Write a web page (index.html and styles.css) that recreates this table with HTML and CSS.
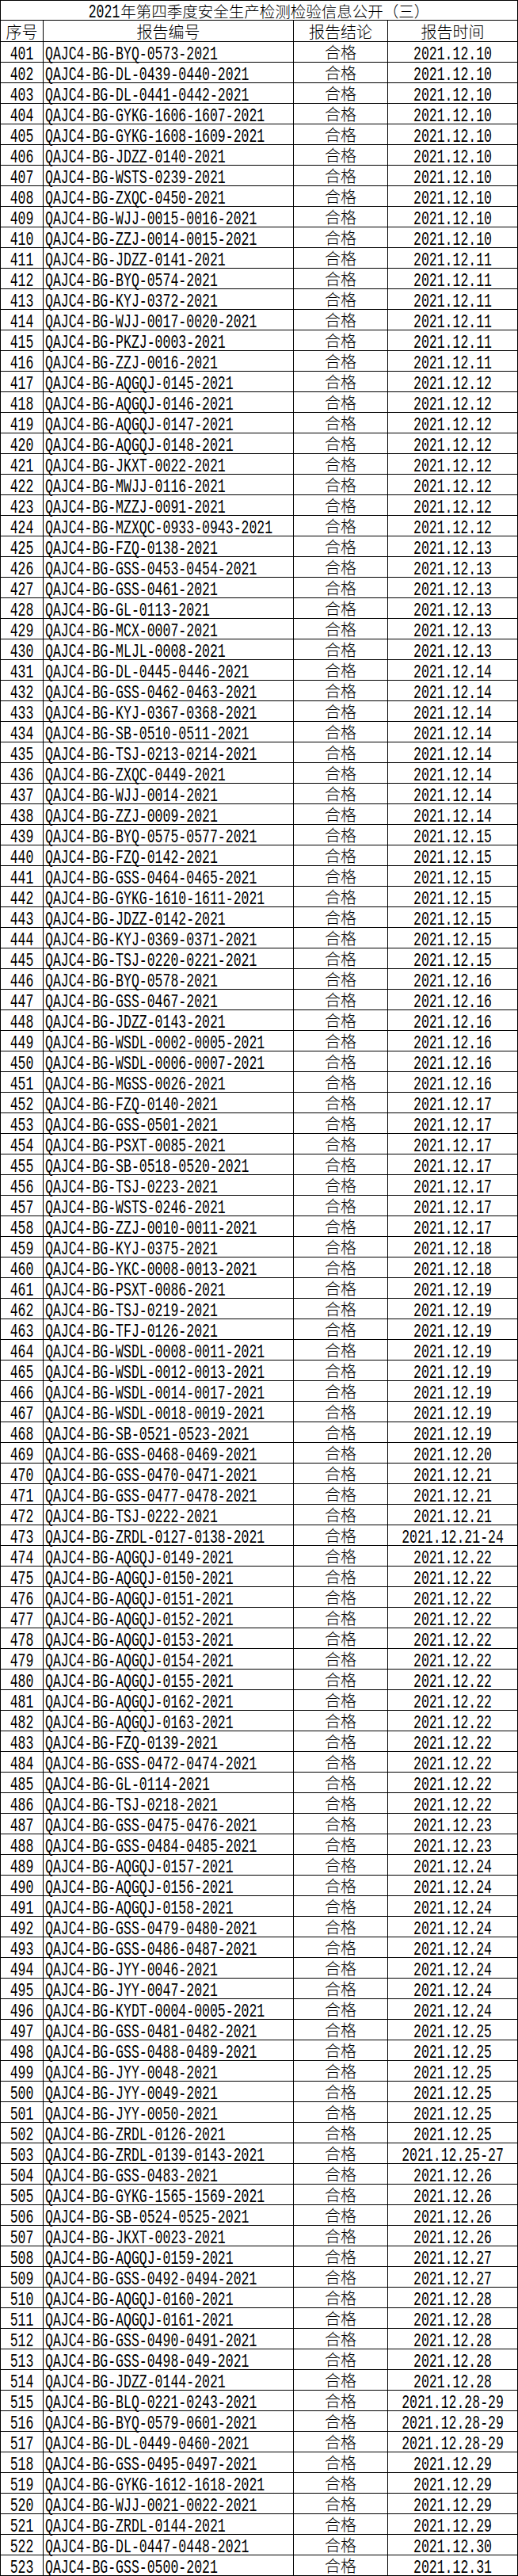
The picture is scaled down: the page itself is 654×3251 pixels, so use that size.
FILE: index.html
```html
<!DOCTYPE html>
<html lang="zh-CN">
<head>
<meta charset="utf-8">
<title>2021年第四季度安全生产检测检验信息公开（三）</title>
<link rel="stylesheet" href="styles.css">
</head>
<body>
<div class="sheet">
<div class="title"><span class="lt">2021</span>年第四季度安全生产检测检验信息公开（三）</div>
<div class="h">序号</div><div class="h">报告编号</div><div class="h">报告结论</div><div class="h">报告时间</div>
<div class="n"><span>401</span></div><div class="k"><span>QAJC4-BG-BYQ-0573-2021</span></div><div class="r">合格</div><div class="d"><span>2021.12.10</span></div>
<div class="n"><span>402</span></div><div class="k"><span>QAJC4-BG-DL-0439-0440-2021</span></div><div class="r">合格</div><div class="d"><span>2021.12.10</span></div>
<div class="n"><span>403</span></div><div class="k"><span>QAJC4-BG-DL-0441-0442-2021</span></div><div class="r">合格</div><div class="d"><span>2021.12.10</span></div>
<div class="n"><span>404</span></div><div class="k"><span>QAJC4-BG-GYKG-1606-1607-2021</span></div><div class="r">合格</div><div class="d"><span>2021.12.10</span></div>
<div class="n"><span>405</span></div><div class="k"><span>QAJC4-BG-GYKG-1608-1609-2021</span></div><div class="r">合格</div><div class="d"><span>2021.12.10</span></div>
<div class="n"><span>406</span></div><div class="k"><span>QAJC4-BG-JDZZ-0140-2021</span></div><div class="r">合格</div><div class="d"><span>2021.12.10</span></div>
<div class="n"><span>407</span></div><div class="k"><span>QAJC4-BG-WSTS-0239-2021</span></div><div class="r">合格</div><div class="d"><span>2021.12.10</span></div>
<div class="n"><span>408</span></div><div class="k"><span>QAJC4-BG-ZXQC-0450-2021</span></div><div class="r">合格</div><div class="d"><span>2021.12.10</span></div>
<div class="n"><span>409</span></div><div class="k"><span>QAJC4-BG-WJJ-0015-0016-2021</span></div><div class="r">合格</div><div class="d"><span>2021.12.10</span></div>
<div class="n"><span>410</span></div><div class="k"><span>QAJC4-BG-ZZJ-0014-0015-2021</span></div><div class="r">合格</div><div class="d"><span>2021.12.10</span></div>
<div class="n"><span>411</span></div><div class="k"><span>QAJC4-BG-JDZZ-0141-2021</span></div><div class="r">合格</div><div class="d"><span>2021.12.11</span></div>
<div class="n"><span>412</span></div><div class="k"><span>QAJC4-BG-BYQ-0574-2021</span></div><div class="r">合格</div><div class="d"><span>2021.12.11</span></div>
<div class="n"><span>413</span></div><div class="k"><span>QAJC4-BG-KYJ-0372-2021</span></div><div class="r">合格</div><div class="d"><span>2021.12.11</span></div>
<div class="n"><span>414</span></div><div class="k"><span>QAJC4-BG-WJJ-0017-0020-2021</span></div><div class="r">合格</div><div class="d"><span>2021.12.11</span></div>
<div class="n"><span>415</span></div><div class="k"><span>QAJC4-BG-PKZJ-0003-2021</span></div><div class="r">合格</div><div class="d"><span>2021.12.11</span></div>
<div class="n"><span>416</span></div><div class="k"><span>QAJC4-BG-ZZJ-0016-2021</span></div><div class="r">合格</div><div class="d"><span>2021.12.11</span></div>
<div class="n"><span>417</span></div><div class="k"><span>QAJC4-BG-AQGQJ-0145-2021</span></div><div class="r">合格</div><div class="d"><span>2021.12.12</span></div>
<div class="n"><span>418</span></div><div class="k"><span>QAJC4-BG-AQGQJ-0146-2021</span></div><div class="r">合格</div><div class="d"><span>2021.12.12</span></div>
<div class="n"><span>419</span></div><div class="k"><span>QAJC4-BG-AQGQJ-0147-2021</span></div><div class="r">合格</div><div class="d"><span>2021.12.12</span></div>
<div class="n"><span>420</span></div><div class="k"><span>QAJC4-BG-AQGQJ-0148-2021</span></div><div class="r">合格</div><div class="d"><span>2021.12.12</span></div>
<div class="n"><span>421</span></div><div class="k"><span>QAJC4-BG-JKXT-0022-2021</span></div><div class="r">合格</div><div class="d"><span>2021.12.12</span></div>
<div class="n"><span>422</span></div><div class="k"><span>QAJC4-BG-MWJJ-0116-2021</span></div><div class="r">合格</div><div class="d"><span>2021.12.12</span></div>
<div class="n"><span>423</span></div><div class="k"><span>QAJC4-BG-MZZJ-0091-2021</span></div><div class="r">合格</div><div class="d"><span>2021.12.12</span></div>
<div class="n"><span>424</span></div><div class="k"><span>QAJC4-BG-MZXQC-0933-0943-2021</span></div><div class="r">合格</div><div class="d"><span>2021.12.12</span></div>
<div class="n"><span>425</span></div><div class="k"><span>QAJC4-BG-FZQ-0138-2021</span></div><div class="r">合格</div><div class="d"><span>2021.12.13</span></div>
<div class="n"><span>426</span></div><div class="k"><span>QAJC4-BG-GSS-0453-0454-2021</span></div><div class="r">合格</div><div class="d"><span>2021.12.13</span></div>
<div class="n"><span>427</span></div><div class="k"><span>QAJC4-BG-GSS-0461-2021</span></div><div class="r">合格</div><div class="d"><span>2021.12.13</span></div>
<div class="n"><span>428</span></div><div class="k"><span>QAJC4-BG-GL-0113-2021</span></div><div class="r">合格</div><div class="d"><span>2021.12.13</span></div>
<div class="n"><span>429</span></div><div class="k"><span>QAJC4-BG-MCX-0007-2021</span></div><div class="r">合格</div><div class="d"><span>2021.12.13</span></div>
<div class="n"><span>430</span></div><div class="k"><span>QAJC4-BG-MLJL-0008-2021</span></div><div class="r">合格</div><div class="d"><span>2021.12.13</span></div>
<div class="n"><span>431</span></div><div class="k"><span>QAJC4-BG-DL-0445-0446-2021</span></div><div class="r">合格</div><div class="d"><span>2021.12.14</span></div>
<div class="n"><span>432</span></div><div class="k"><span>QAJC4-BG-GSS-0462-0463-2021</span></div><div class="r">合格</div><div class="d"><span>2021.12.14</span></div>
<div class="n"><span>433</span></div><div class="k"><span>QAJC4-BG-KYJ-0367-0368-2021</span></div><div class="r">合格</div><div class="d"><span>2021.12.14</span></div>
<div class="n"><span>434</span></div><div class="k"><span>QAJC4-BG-SB-0510-0511-2021</span></div><div class="r">合格</div><div class="d"><span>2021.12.14</span></div>
<div class="n"><span>435</span></div><div class="k"><span>QAJC4-BG-TSJ-0213-0214-2021</span></div><div class="r">合格</div><div class="d"><span>2021.12.14</span></div>
<div class="n"><span>436</span></div><div class="k"><span>QAJC4-BG-ZXQC-0449-2021</span></div><div class="r">合格</div><div class="d"><span>2021.12.14</span></div>
<div class="n"><span>437</span></div><div class="k"><span>QAJC4-BG-WJJ-0014-2021</span></div><div class="r">合格</div><div class="d"><span>2021.12.14</span></div>
<div class="n"><span>438</span></div><div class="k"><span>QAJC4-BG-ZZJ-0009-2021</span></div><div class="r">合格</div><div class="d"><span>2021.12.14</span></div>
<div class="n"><span>439</span></div><div class="k"><span>QAJC4-BG-BYQ-0575-0577-2021</span></div><div class="r">合格</div><div class="d"><span>2021.12.15</span></div>
<div class="n"><span>440</span></div><div class="k"><span>QAJC4-BG-FZQ-0142-2021</span></div><div class="r">合格</div><div class="d"><span>2021.12.15</span></div>
<div class="n"><span>441</span></div><div class="k"><span>QAJC4-BG-GSS-0464-0465-2021</span></div><div class="r">合格</div><div class="d"><span>2021.12.15</span></div>
<div class="n"><span>442</span></div><div class="k"><span>QAJC4-BG-GYKG-1610-1611-2021</span></div><div class="r">合格</div><div class="d"><span>2021.12.15</span></div>
<div class="n"><span>443</span></div><div class="k"><span>QAJC4-BG-JDZZ-0142-2021</span></div><div class="r">合格</div><div class="d"><span>2021.12.15</span></div>
<div class="n"><span>444</span></div><div class="k"><span>QAJC4-BG-KYJ-0369-0371-2021</span></div><div class="r">合格</div><div class="d"><span>2021.12.15</span></div>
<div class="n"><span>445</span></div><div class="k"><span>QAJC4-BG-TSJ-0220-0221-2021</span></div><div class="r">合格</div><div class="d"><span>2021.12.15</span></div>
<div class="n"><span>446</span></div><div class="k"><span>QAJC4-BG-BYQ-0578-2021</span></div><div class="r">合格</div><div class="d"><span>2021.12.16</span></div>
<div class="n"><span>447</span></div><div class="k"><span>QAJC4-BG-GSS-0467-2021</span></div><div class="r">合格</div><div class="d"><span>2021.12.16</span></div>
<div class="n"><span>448</span></div><div class="k"><span>QAJC4-BG-JDZZ-0143-2021</span></div><div class="r">合格</div><div class="d"><span>2021.12.16</span></div>
<div class="n"><span>449</span></div><div class="k"><span>QAJC4-BG-WSDL-0002-0005-2021</span></div><div class="r">合格</div><div class="d"><span>2021.12.16</span></div>
<div class="n"><span>450</span></div><div class="k"><span>QAJC4-BG-WSDL-0006-0007-2021</span></div><div class="r">合格</div><div class="d"><span>2021.12.16</span></div>
<div class="n"><span>451</span></div><div class="k"><span>QAJC4-BG-MGSS-0026-2021</span></div><div class="r">合格</div><div class="d"><span>2021.12.16</span></div>
<div class="n"><span>452</span></div><div class="k"><span>QAJC4-BG-FZQ-0140-2021</span></div><div class="r">合格</div><div class="d"><span>2021.12.17</span></div>
<div class="n"><span>453</span></div><div class="k"><span>QAJC4-BG-GSS-0501-2021</span></div><div class="r">合格</div><div class="d"><span>2021.12.17</span></div>
<div class="n"><span>454</span></div><div class="k"><span>QAJC4-BG-PSXT-0085-2021</span></div><div class="r">合格</div><div class="d"><span>2021.12.17</span></div>
<div class="n"><span>455</span></div><div class="k"><span>QAJC4-BG-SB-0518-0520-2021</span></div><div class="r">合格</div><div class="d"><span>2021.12.17</span></div>
<div class="n"><span>456</span></div><div class="k"><span>QAJC4-BG-TSJ-0223-2021</span></div><div class="r">合格</div><div class="d"><span>2021.12.17</span></div>
<div class="n"><span>457</span></div><div class="k"><span>QAJC4-BG-WSTS-0246-2021</span></div><div class="r">合格</div><div class="d"><span>2021.12.17</span></div>
<div class="n"><span>458</span></div><div class="k"><span>QAJC4-BG-ZZJ-0010-0011-2021</span></div><div class="r">合格</div><div class="d"><span>2021.12.17</span></div>
<div class="n"><span>459</span></div><div class="k"><span>QAJC4-BG-KYJ-0375-2021</span></div><div class="r">合格</div><div class="d"><span>2021.12.18</span></div>
<div class="n"><span>460</span></div><div class="k"><span>QAJC4-BG-YKC-0008-0013-2021</span></div><div class="r">合格</div><div class="d"><span>2021.12.18</span></div>
<div class="n"><span>461</span></div><div class="k"><span>QAJC4-BG-PSXT-0086-2021</span></div><div class="r">合格</div><div class="d"><span>2021.12.19</span></div>
<div class="n"><span>462</span></div><div class="k"><span>QAJC4-BG-TSJ-0219-2021</span></div><div class="r">合格</div><div class="d"><span>2021.12.19</span></div>
<div class="n"><span>463</span></div><div class="k"><span>QAJC4-BG-TFJ-0126-2021</span></div><div class="r">合格</div><div class="d"><span>2021.12.19</span></div>
<div class="n"><span>464</span></div><div class="k"><span>QAJC4-BG-WSDL-0008-0011-2021</span></div><div class="r">合格</div><div class="d"><span>2021.12.19</span></div>
<div class="n"><span>465</span></div><div class="k"><span>QAJC4-BG-WSDL-0012-0013-2021</span></div><div class="r">合格</div><div class="d"><span>2021.12.19</span></div>
<div class="n"><span>466</span></div><div class="k"><span>QAJC4-BG-WSDL-0014-0017-2021</span></div><div class="r">合格</div><div class="d"><span>2021.12.19</span></div>
<div class="n"><span>467</span></div><div class="k"><span>QAJC4-BG-WSDL-0018-0019-2021</span></div><div class="r">合格</div><div class="d"><span>2021.12.19</span></div>
<div class="n"><span>468</span></div><div class="k"><span>QAJC4-BG-SB-0521-0523-2021</span></div><div class="r">合格</div><div class="d"><span>2021.12.19</span></div>
<div class="n"><span>469</span></div><div class="k"><span>QAJC4-BG-GSS-0468-0469-2021</span></div><div class="r">合格</div><div class="d"><span>2021.12.20</span></div>
<div class="n"><span>470</span></div><div class="k"><span>QAJC4-BG-GSS-0470-0471-2021</span></div><div class="r">合格</div><div class="d"><span>2021.12.21</span></div>
<div class="n"><span>471</span></div><div class="k"><span>QAJC4-BG-GSS-0477-0478-2021</span></div><div class="r">合格</div><div class="d"><span>2021.12.21</span></div>
<div class="n"><span>472</span></div><div class="k"><span>QAJC4-BG-TSJ-0222-2021</span></div><div class="r">合格</div><div class="d"><span>2021.12.21</span></div>
<div class="n"><span>473</span></div><div class="k"><span>QAJC4-BG-ZRDL-0127-0138-2021</span></div><div class="r">合格</div><div class="d"><span>2021.12.21-24</span></div>
<div class="n"><span>474</span></div><div class="k"><span>QAJC4-BG-AQGQJ-0149-2021</span></div><div class="r">合格</div><div class="d"><span>2021.12.22</span></div>
<div class="n"><span>475</span></div><div class="k"><span>QAJC4-BG-AQGQJ-0150-2021</span></div><div class="r">合格</div><div class="d"><span>2021.12.22</span></div>
<div class="n"><span>476</span></div><div class="k"><span>QAJC4-BG-AQGQJ-0151-2021</span></div><div class="r">合格</div><div class="d"><span>2021.12.22</span></div>
<div class="n"><span>477</span></div><div class="k"><span>QAJC4-BG-AQGQJ-0152-2021</span></div><div class="r">合格</div><div class="d"><span>2021.12.22</span></div>
<div class="n"><span>478</span></div><div class="k"><span>QAJC4-BG-AQGQJ-0153-2021</span></div><div class="r">合格</div><div class="d"><span>2021.12.22</span></div>
<div class="n"><span>479</span></div><div class="k"><span>QAJC4-BG-AQGQJ-0154-2021</span></div><div class="r">合格</div><div class="d"><span>2021.12.22</span></div>
<div class="n"><span>480</span></div><div class="k"><span>QAJC4-BG-AQGQJ-0155-2021</span></div><div class="r">合格</div><div class="d"><span>2021.12.22</span></div>
<div class="n"><span>481</span></div><div class="k"><span>QAJC4-BG-AQGQJ-0162-2021</span></div><div class="r">合格</div><div class="d"><span>2021.12.22</span></div>
<div class="n"><span>482</span></div><div class="k"><span>QAJC4-BG-AQGQJ-0163-2021</span></div><div class="r">合格</div><div class="d"><span>2021.12.22</span></div>
<div class="n"><span>483</span></div><div class="k"><span>QAJC4-BG-FZQ-0139-2021</span></div><div class="r">合格</div><div class="d"><span>2021.12.22</span></div>
<div class="n"><span>484</span></div><div class="k"><span>QAJC4-BG-GSS-0472-0474-2021</span></div><div class="r">合格</div><div class="d"><span>2021.12.22</span></div>
<div class="n"><span>485</span></div><div class="k"><span>QAJC4-BG-GL-0114-2021</span></div><div class="r">合格</div><div class="d"><span>2021.12.22</span></div>
<div class="n"><span>486</span></div><div class="k"><span>QAJC4-BG-TSJ-0218-2021</span></div><div class="r">合格</div><div class="d"><span>2021.12.22</span></div>
<div class="n"><span>487</span></div><div class="k"><span>QAJC4-BG-GSS-0475-0476-2021</span></div><div class="r">合格</div><div class="d"><span>2021.12.23</span></div>
<div class="n"><span>488</span></div><div class="k"><span>QAJC4-BG-GSS-0484-0485-2021</span></div><div class="r">合格</div><div class="d"><span>2021.12.23</span></div>
<div class="n"><span>489</span></div><div class="k"><span>QAJC4-BG-AQGQJ-0157-2021</span></div><div class="r">合格</div><div class="d"><span>2021.12.24</span></div>
<div class="n"><span>490</span></div><div class="k"><span>QAJC4-BG-AQGQJ-0156-2021</span></div><div class="r">合格</div><div class="d"><span>2021.12.24</span></div>
<div class="n"><span>491</span></div><div class="k"><span>QAJC4-BG-AQGQJ-0158-2021</span></div><div class="r">合格</div><div class="d"><span>2021.12.24</span></div>
<div class="n"><span>492</span></div><div class="k"><span>QAJC4-BG-GSS-0479-0480-2021</span></div><div class="r">合格</div><div class="d"><span>2021.12.24</span></div>
<div class="n"><span>493</span></div><div class="k"><span>QAJC4-BG-GSS-0486-0487-2021</span></div><div class="r">合格</div><div class="d"><span>2021.12.24</span></div>
<div class="n"><span>494</span></div><div class="k"><span>QAJC4-BG-JYY-0046-2021</span></div><div class="r">合格</div><div class="d"><span>2021.12.24</span></div>
<div class="n"><span>495</span></div><div class="k"><span>QAJC4-BG-JYY-0047-2021</span></div><div class="r">合格</div><div class="d"><span>2021.12.24</span></div>
<div class="n"><span>496</span></div><div class="k"><span>QAJC4-BG-KYDT-0004-0005-2021</span></div><div class="r">合格</div><div class="d"><span>2021.12.24</span></div>
<div class="n"><span>497</span></div><div class="k"><span>QAJC4-BG-GSS-0481-0482-2021</span></div><div class="r">合格</div><div class="d"><span>2021.12.25</span></div>
<div class="n"><span>498</span></div><div class="k"><span>QAJC4-BG-GSS-0488-0489-2021</span></div><div class="r">合格</div><div class="d"><span>2021.12.25</span></div>
<div class="n"><span>499</span></div><div class="k"><span>QAJC4-BG-JYY-0048-2021</span></div><div class="r">合格</div><div class="d"><span>2021.12.25</span></div>
<div class="n"><span>500</span></div><div class="k"><span>QAJC4-BG-JYY-0049-2021</span></div><div class="r">合格</div><div class="d"><span>2021.12.25</span></div>
<div class="n"><span>501</span></div><div class="k"><span>QAJC4-BG-JYY-0050-2021</span></div><div class="r">合格</div><div class="d"><span>2021.12.25</span></div>
<div class="n"><span>502</span></div><div class="k"><span>QAJC4-BG-ZRDL-0126-2021</span></div><div class="r">合格</div><div class="d"><span>2021.12.25</span></div>
<div class="n"><span>503</span></div><div class="k"><span>QAJC4-BG-ZRDL-0139-0143-2021</span></div><div class="r">合格</div><div class="d"><span>2021.12.25-27</span></div>
<div class="n"><span>504</span></div><div class="k"><span>QAJC4-BG-GSS-0483-2021</span></div><div class="r">合格</div><div class="d"><span>2021.12.26</span></div>
<div class="n"><span>505</span></div><div class="k"><span>QAJC4-BG-GYKG-1565-1569-2021</span></div><div class="r">合格</div><div class="d"><span>2021.12.26</span></div>
<div class="n"><span>506</span></div><div class="k"><span>QAJC4-BG-SB-0524-0525-2021</span></div><div class="r">合格</div><div class="d"><span>2021.12.26</span></div>
<div class="n"><span>507</span></div><div class="k"><span>QAJC4-BG-JKXT-0023-2021</span></div><div class="r">合格</div><div class="d"><span>2021.12.26</span></div>
<div class="n"><span>508</span></div><div class="k"><span>QAJC4-BG-AQGQJ-0159-2021</span></div><div class="r">合格</div><div class="d"><span>2021.12.27</span></div>
<div class="n"><span>509</span></div><div class="k"><span>QAJC4-BG-GSS-0492-0494-2021</span></div><div class="r">合格</div><div class="d"><span>2021.12.27</span></div>
<div class="n"><span>510</span></div><div class="k"><span>QAJC4-BG-AQGQJ-0160-2021</span></div><div class="r">合格</div><div class="d"><span>2021.12.28</span></div>
<div class="n"><span>511</span></div><div class="k"><span>QAJC4-BG-AQGQJ-0161-2021</span></div><div class="r">合格</div><div class="d"><span>2021.12.28</span></div>
<div class="n"><span>512</span></div><div class="k"><span>QAJC4-BG-GSS-0490-0491-2021</span></div><div class="r">合格</div><div class="d"><span>2021.12.28</span></div>
<div class="n"><span>513</span></div><div class="k"><span>QAJC4-BG-GSS-0498-049-2021</span></div><div class="r">合格</div><div class="d"><span>2021.12.28</span></div>
<div class="n"><span>514</span></div><div class="k"><span>QAJC4-BG-JDZZ-0144-2021</span></div><div class="r">合格</div><div class="d"><span>2021.12.28</span></div>
<div class="n"><span>515</span></div><div class="k"><span>QAJC4-BG-BLQ-0221-0243-2021</span></div><div class="r">合格</div><div class="d"><span>2021.12.28-29</span></div>
<div class="n"><span>516</span></div><div class="k"><span>QAJC4-BG-BYQ-0579-0601-2021</span></div><div class="r">合格</div><div class="d"><span>2021.12.28-29</span></div>
<div class="n"><span>517</span></div><div class="k"><span>QAJC4-BG-DL-0449-0460-2021</span></div><div class="r">合格</div><div class="d"><span>2021.12.28-29</span></div>
<div class="n"><span>518</span></div><div class="k"><span>QAJC4-BG-GSS-0495-0497-2021</span></div><div class="r">合格</div><div class="d"><span>2021.12.29</span></div>
<div class="n"><span>519</span></div><div class="k"><span>QAJC4-BG-GYKG-1612-1618-2021</span></div><div class="r">合格</div><div class="d"><span>2021.12.29</span></div>
<div class="n"><span>520</span></div><div class="k"><span>QAJC4-BG-WJJ-0021-0022-2021</span></div><div class="r">合格</div><div class="d"><span>2021.12.29</span></div>
<div class="n"><span>521</span></div><div class="k"><span>QAJC4-BG-ZRDL-0144-2021</span></div><div class="r">合格</div><div class="d"><span>2021.12.29</span></div>
<div class="n"><span>522</span></div><div class="k"><span>QAJC4-BG-DL-0447-0448-2021</span></div><div class="r">合格</div><div class="d"><span>2021.12.30</span></div>
<div class="n"><span>523</span></div><div class="k"><span>QAJC4-BG-GSS-0500-2021</span></div><div class="r">合格</div><div class="d"><span>2021.12.31</span></div>
</div>
</body>
</html>
```
FILE: styles.css
```css
html, body {
  margin: 0;
  padding: 0;
  background: #fff;
}

.sheet {
  display: grid;
  grid-template-columns: 53px 315px 118px 163px;
  grid-template-rows: 24px 26px;
  grid-auto-rows: 25px;
  gap: 1px;
  padding: 1px;
  width: max-content;
  background: #000;
  color: #000;
  font-family: "Noto Sans CJK SC", "Liberation Sans", sans-serif;
  font-weight: 300;
  font-size: 20px;
}

.sheet > div {
  background: #fff;
  display: flex;
  align-items: flex-end;
  justify-content: center;
  white-space: nowrap;
  line-height: 20px;
  padding-bottom: 2px;
  box-sizing: border-box;
}

.sheet > .title {
  grid-column: 1 / -1;
  font-size: 19.5px;
  line-height: 20px;
  padding-bottom: 1px;
}

.sheet > .h {
  padding-bottom: 2px;
}

.sheet > .k {
  justify-content: flex-start;
  padding-left: 2px;
}

.n span,
.k span,
.d span,
.lt {
  display: inline-block;
  font-family: "Liberation Mono", "DejaVu Sans Mono", monospace;
  font-weight: 400;
  font-size: 16.5px;
  line-height: 16px;
  transform: scaleY(1.42);
}

.sheet > .n,
.sheet > .k,
.sheet > .d {
  padding-bottom: 1px;
}

.lt {
  margin-right: 1px;
}
```
